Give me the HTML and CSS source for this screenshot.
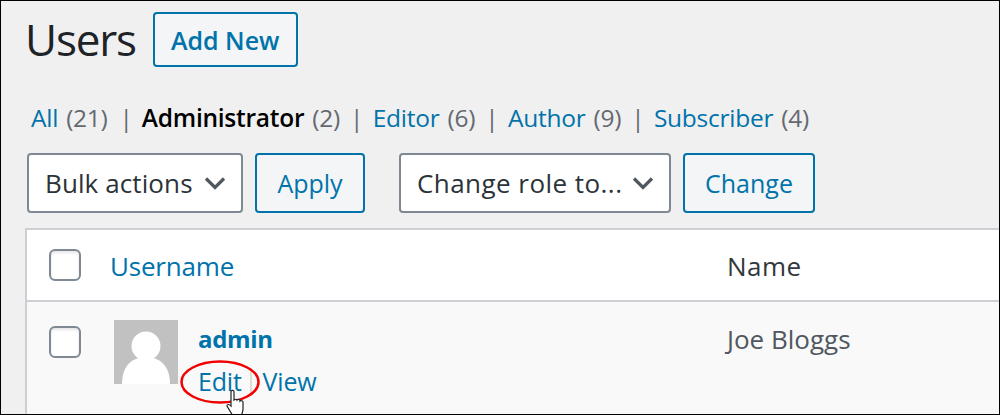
FILE: index.html
```html
<!DOCTYPE html>
<html lang="en">
<head>
<meta charset="utf-8">
<title>Users</title>
<link rel="stylesheet" href="styles.css">
</head>
<body>
<div class="frame">
  <header class="title-row">
    <h1 class="title">Users</h1>
    <a class="btn add-new">Add New</a>
  </header>
  <nav class="filters">
    <a class="link">All</a><span class="count">(21)</span><span class="sep sep-first">|</span>
    <strong class="current">Administrator</strong><span class="count">(2)</span><span class="sep">|</span>
    <a class="link">Editor</a><span class="count">(6)</span><span class="sep">|</span>
    <a class="link">Author</a><span class="count">(9)</span><span class="sep">|</span>
    <a class="link">Subscriber</a><span class="count">(4)</span>
  </nav>
  <div class="actions">
    <div class="select bulk"><span>Bulk actions</span><svg class="chev" viewBox="0 0 22 14"><path d="M2 2.500 11 11.500l9-9" fill="none" stroke="#50575e" stroke-width="3.200"/></svg></div>
    <a class="btn apply">Apply</a>
    <div class="select role"><span>Change role to...</span><svg class="chev" viewBox="0 0 22 14"><path d="M2 2.500 11 11.500l9-9" fill="none" stroke="#50575e" stroke-width="3.200"/></svg></div>
    <a class="btn change">Change</a>
  </div>
  <section class="table">
    <div class="thead">
      <span class="check"></span>
      <a class="col-user link">Username</a>
      <span class="col-name">Name</span>
    </div>
    <div class="row">
      <span class="check"></span>
      <div class="avatar">
        <svg viewBox="0 0 64 64"><rect width="64" height="64" fill="#c1c1c1"/><circle cx="32" cy="26" r="14.500" fill="#fff"/><path d="M8 64c0-18 10-27 24-27s24 9 24 27z" fill="#fff"/></svg>
      </div>
      <div class="user-cell">
        <a class="username">admin</a>
        <div class="row-actions"><a class="link">Edit</a><span class="divider"></span><a class="link">View</a></div>
      </div>
      <span class="col-name joe">Joe Bloggs</span>
    </div>
  </section>
  <svg class="callout" viewBox="0 0 82 46"><ellipse cx="41" cy="23" rx="38.500" ry="20.500" fill="none" stroke="#f00000" stroke-width="2.500"/></svg>
  <svg class="cursor" viewBox="0 0 20 28"><path d="M5 2c1-1 3-1 3 1v8c1-1 3-1 3 0 1-1 3-1 3 1 1-1 3 0 3 1v7c0 3-1 5-2 7H7L1 17c0-2 2-2 4 0z" fill="#fff" stroke="#222" stroke-width="1.200"/></svg>
</div>
</body>
</html>
```

FILE: styles.css
```css
* { box-sizing: border-box; }
html, body { margin: 0; height: 100%; }
body { width: 1000px; height: 415px; overflow: hidden; font-family: "Open Sans", "Noto Sans", sans-serif; }
a { color: #0073aa; text-decoration: none; }
.frame { position: relative; width: 1000px; height: 415px; overflow: hidden; background: #f0f0f1; border: 1px solid #000; padding: 11px 0 0 26px; }
.title-row { display: flex; align-items: center; gap: 17px; height: 55px; }
.title { margin: 0 0 0 -2px; font-size: 44px; font-weight: 400; color: #1d2327; line-height: 55px; letter-spacing: -1.2px; }
.btn { display: flex; align-items: center; justify-content: center; border: 2px solid #0073aa; border-radius: 4px; background: #f3f5f6; color: #0073aa; font-size: 25px; letter-spacing: 0; }
.add-new { width: 145px; height: 55px; font-weight: 600; }
.filters { display: flex; align-items: center; height: 30px; margin-top: 35px; padding-left: 4px; font-size: 24.5px; color: #646970; white-space: nowrap; letter-spacing: -0.25px; }
.count { margin-left: 8px; }
.sep { margin: 0 9.5px 0 10px; color: #646970; font-weight: 400; }
.sep-first { margin: 0 7px 0 12px; }
.current { margin-left: 2px; color: #000; font-weight: 600; }
.actions { display: flex; height: 60px; margin-top: 21px; }
.select { display: flex; align-items: center; justify-content: space-between; height: 60px; padding: 0 15px 0 16px; border: 2px solid #7e8993; border-radius: 4px; background: #fff; color: #2c3338; font-size: 26px; letter-spacing: 0.1px; white-space: nowrap; }
.bulk { width: 216px; }
.role { width: 272px; margin-left: 34px; letter-spacing: 0.45px; }
.chev { width: 22px; height: 14px; flex: none; }
.apply { width: 110px; height: 60px; margin-left: 12px; }
.change { width: 132px; height: 60px; margin-left: 12px; }
.table { width: 1000px; margin: 15px 0 0 -2px; border-top: 2px solid #ccd0d4; border-left: 2px solid #ccd0d4; background: #fff; font-size: 26px; letter-spacing: -0.2px; }
.thead { display: flex; align-items: center; height: 72px; padding-top: 2px; border-bottom: 2px solid #ccd0d4; }
.thead .check { margin-top: -2px; }
.check { flex: none; display: block; width: 32px; height: 32px; margin-left: 22px; border: 2px solid #7e8993; border-radius: 6px; background: #fff; box-shadow: inset 0 2px 3px rgba(0,0,0,.1); }
.col-user { margin-left: 29px; width: 617px; color: #0073aa; }
.col-name { color: #32373c; letter-spacing: 0.5px; }
.row { display: flex; align-items: flex-start; height: 120px; background: #f9f9f9; padding-top: 18px; }
.row .check { margin-top: 6px; }
.avatar { flex: none; width: 64px; height: 64px; margin-left: 33px; }
.avatar svg { display: block; width: 64px; height: 64px; }
.user-cell { width: 529px; margin-left: 20px; }
.username { display: block; margin-top: 3px; font-size: 24px; font-weight: 700; line-height: 32px; letter-spacing: -0.3px; color: #0073aa; }
.row-actions { display: flex; align-items: center; margin-top: 10px; line-height: 32px; font-size: 25px; }
.divider { width: 2px; height: 26px; margin: 0 11px 0 8px; background: #dcdcd0; }
.joe { margin-top: 3px; line-height: 32px; color: #50575e; font-size: 26px; letter-spacing: 0; }
.callout { position: absolute; left: 178px; top: 358px; width: 82px; height: 46px; }
.cursor { position: absolute; left: 225px; top: 388px; width: 20px; height: 28px; }
```
